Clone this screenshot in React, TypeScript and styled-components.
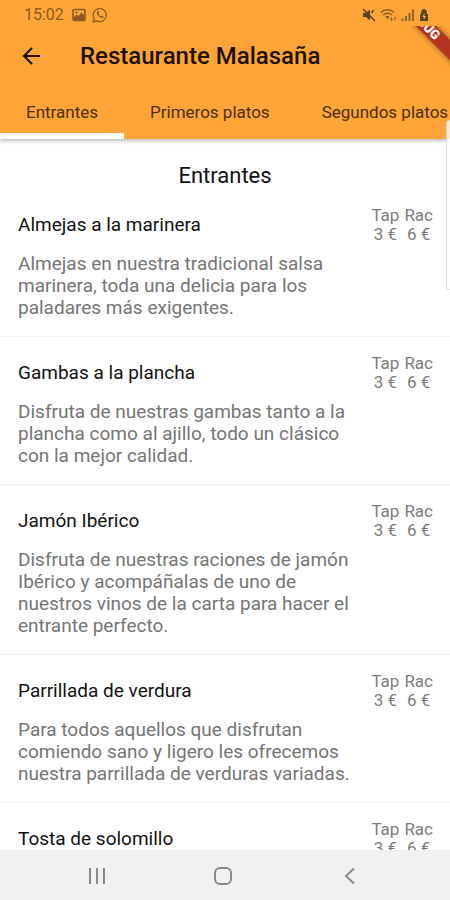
import React from 'react';
import styled, { createGlobalStyle } from 'styled-components';

const GlobalStyle = createGlobalStyle`
  * { box-sizing: border-box; }
  body {
    margin: 0;
    background: #fff;
    font-family: Roboto, sans-serif;
  }
  button { border: 0; padding: 0; background: none; font: inherit; color: inherit; cursor: pointer; }
  h1, h2, h3, p { margin: 0; }
`;

const Screen = styled.div`
  position: relative;
  display: flex;
  flex-direction: column;
  height: 100vh;
  overflow: hidden;
`;

const Header = styled.header`
  position: relative;
  z-index: 1;
  flex: none;
  background: #ffa537;
  box-shadow: 0 1px 5px rgba(0, 0, 0, 0.35);
`;

const StatusBar = styled.div`
  display: flex;
  align-items: center;
  justify-content: space-between;
  height: 28px;
  padding: 1px 21px 0 24px;
  color: #8a5a20;
`;

const StatusGroup = styled.div<{ $gap: number }>`
  display: flex;
  align-items: center;
  gap: ${({ $gap }) => $gap}px;
`;

const Clock = styled.span`
  margin-right: 2px;
  font-size: 16px;
  line-height: 20px;
`;

const AppBar = styled.div`
  display: flex;
  align-items: center;
  gap: 36px;
  height: 56px;
  padding: 0 20px;
`;

const BackButton = styled.button`
  display: flex;
  color: #1c1104;
`;

const Title = styled.h1`
  color: #1c1104;
  font-size: 24px;
  font-weight: 500;
  line-height: 32px;
  white-space: nowrap;
`;

const Tabs = styled.div`
  display: flex;
  height: 55px;
  overflow: hidden;
`;

const Tab = styled.button<{ $active: boolean }>`
  flex: none;
  padding: 6px 26px 0;
  border-bottom: 6px solid ${({ $active }) => ($active ? '#fff' : 'transparent')};
  color: #4a2f0c;
  font-size: 17px;
  line-height: 20px;
  white-space: nowrap;
`;

const RibbonCorner = styled.div`
  position: absolute;
  top: 26px;
  right: 0;
  width: 60px;
  height: 50px;
  overflow: hidden;
`;

const Ribbon = styled.div`
  position: absolute;
  top: -10px;
  left: -27px;
  width: 120px;
  height: 14px;
  background: #b5341f;
  box-shadow: 0 0 6px rgba(0, 0, 0, 0.5);
  color: #fff;
  font-size: 13px;
  font-weight: 900;
  line-height: 14px;
  text-align: center;
  transform: rotate(45deg);
`;

const Content = styled.main`
  flex: 1;
  min-height: 0;
  overflow: hidden;
`;

const SectionTitle = styled.h2`
  padding-top: 24px;
  color: #111;
  font-size: 22px;
  font-weight: 400;
  line-height: 26px;
  text-align: center;
`;

const DishList = styled.ul`
  margin: 0;
  padding: 0;
  list-style: none;
`;

const DishRow = styled.li`
  display: flex;
  justify-content: space-between;
  padding: 17px 17px 17px 18px;
  border-bottom: 1px solid #f0f0f0;
`;

const DishText = styled.div`
  flex: 1;
  max-width: 340px;
  padding-top: 8px;
`;

const DishName = styled.h3`
  margin-bottom: 17px;
  color: #111;
  font-size: 19px;
  font-weight: 400;
  line-height: 22px;
`;

const Description = styled.p`
  color: #757575;
  font-size: 19px;
  line-height: 22px;
`;

const Prices = styled.table`
  align-self: flex-start;
  border-collapse: collapse;
  color: #7c7c7c;
  font-size: 17px;
  line-height: 19px;
  text-align: center;
  white-space: nowrap;

  th, td { padding: 0; font-weight: 400; }
  th + th, td + td { padding-left: 5px; }
`;

const EdgeHandle = styled.div`
  position: absolute;
  z-index: 2;
  top: 120px;
  right: 0;
  width: 4px;
  height: 170px;
  border: 1px solid #dcdcdc;
  border-right: 0;
  border-radius: 4px 0 0 4px;
  background: rgba(255, 255, 255, 0.75);
`;

const NavBar = styled.nav`
  display: flex;
  flex: none;
  align-items: center;
  justify-content: space-around;
  height: 50px;
  padding: 2px 37px 0 34px;
  background: #f1f1f1;
  color: #8a8a8a;
`;

const NavButton = styled.button`
  display: flex;
`;

const tabs = ['Entrantes', 'Primeros platos', 'Segundos platos'];

const dishes = [
  {
    name: 'Almejas a la marinera',
    text: 'Almejas en nuestra tradicional salsa marinera, toda una delicia para los paladares más exigentes.',
  },
  {
    name: 'Gambas a la plancha',
    text: 'Disfruta de nuestras gambas tanto a la plancha como al ajillo, todo un clásico con la mejor calidad.',
  },
  {
    name: 'Jamón Ibérico',
    text: 'Disfruta de nuestras raciones de jamón Ibérico y acompáñalas de uno de nuestros vinos de la carta para hacer el entrante perfecto.',
  },
  {
    name: 'Parrillada de verdura',
    text: 'Para todos aquellos que disfrutan comiendo sano y ligero les ofrecemos nuestra parrillada de verduras variadas.',
  },
  { name: 'Tosta de solomillo', text: '' },
];

const PictureIcon = () => (
  <svg width="14" height="14" viewBox="0 0 14 14" fill="none" stroke="currentColor" strokeWidth="1.6">
    <rect x="1" y="1.5" width="12" height="11" rx="1" />
    <path d="M1.500 12V9.500L4.500 6.500l2 1.500L9.500 4.500 12.500 7.500V12z" fill="currentColor" stroke="none" />
    <circle cx="4.500" cy="4.500" r="1" fill="currentColor" stroke="none" />
  </svg>
);

const WhatsAppIcon = () => (
  <svg width="16" height="16" viewBox="0 0 16 16" fill="none" stroke="currentColor" strokeWidth="1.300">
    <path d="M1.200 14.800l1-3.500A6.500 6.500 0 1 1 4.800 13.800z" />
    <path d="M5.500 4.200c-1.500 1.300-.3 3.700 1.200 5.100 1.400 1.400 3.700 2.400 4.800.9.300-.5.100-.8-.3-1l-1.200-.6-.9.900C7.800 9 6.900 8 6.500 7l.7-.9-.6-1.600c-.2-.5-.7-.6-1.100-.3z" fill="currentColor" stroke="none" />
  </svg>
);

const MutedIcon = () => (
  <svg width="14" height="14" viewBox="0 0 14 14">
    <path d="M1 5h3l4-3.500v11L4 9H1z" fill="#59451d" />
    <path d="M1 1l12 12M9.500 5l2-3" stroke="#59451d" strokeWidth="1.600" />
  </svg>
);

const WifiIcon = () => (
  <svg width="17" height="14" viewBox="0 0 17 14" fill="none" stroke="#80602a" strokeWidth="1.500">
    <path d="M1 4.500c3.500-3.600 9.500-3.600 13 0M3.300 7c2.300-2.200 6.100-2.200 8.400 0" />
    <path d="M5.300 8.500c1.400-1 3-1 4.400 0L7.500 11z" fill="#80602a" stroke="none" />
    <path d="M11.500 9v3.500M10 11l1.500 1.500L13 11M15 12.500V9M13.800 10.200L15 9l1.200 1.200" strokeWidth="0.900" />
  </svg>
);

const SignalIcon = () => (
  <svg width="14" height="14" viewBox="0 0 14 14" stroke="#80602a" strokeWidth="1.800">
    <path d="M1.500 10.500V13M5 8v5M8.500 5v8M12 1.500V13" />
  </svg>
);

const BatteryIcon = () => (
  <svg width="10" height="14" viewBox="0 0 10 14">
    <path d="M3.500 1h3v1.500h1.300V6H9v7H1V6h1.200V2.500h1.300z" fill="#59451d" />
    <path d="M5.500 5L3.500 9H5l-.5 3L7 8H5.300z" fill="#ffb65a" />
  </svg>
);

const BackIcon = () => (
  <svg width="24" height="24" viewBox="0 0 24 24" fill="none" stroke="currentColor" strokeWidth="2.200">
    <path d="M20 12H4.500M12 4l-8 8 8 8" />
  </svg>
);

export default function App() {
  return (
    <>
      <GlobalStyle />
      <Screen>
        <Header>
          <StatusBar>
            <StatusGroup $gap={6}>
              <Clock>15:02</Clock>
              <PictureIcon />
              <WhatsAppIcon />
            </StatusGroup>
            <StatusGroup $gap={4}>
              <MutedIcon />
              <WifiIcon />
              <SignalIcon />
              <BatteryIcon />
            </StatusGroup>
          </StatusBar>
          <AppBar>
            <BackButton aria-label="Volver">
              <BackIcon />
            </BackButton>
            <Title>Restaurante Malasaña</Title>
          </AppBar>
          <Tabs role="tablist">
            {tabs.map((tab, i) => (
              <Tab key={tab} role="tab" aria-selected={i === 0} $active={i === 0}>
                {tab}
              </Tab>
            ))}
          </Tabs>
          <RibbonCorner>
            <Ribbon>DEBUG</Ribbon>
          </RibbonCorner>
        </Header>

        <Content>
          <SectionTitle>Entrantes</SectionTitle>
          <DishList>
            {dishes.map((dish) => (
              <DishRow key={dish.name}>
                <DishText>
                  <DishName>{dish.name}</DishName>
                  {dish.text && <Description>{dish.text}</Description>}
                </DishText>
                <Prices>
                  <thead>
                    <tr>
                      <th scope="col">Tap</th>
                      <th scope="col">Rac</th>
                    </tr>
                  </thead>
                  <tbody>
                    <tr>
                      <td>3 €</td>
                      <td>6 €</td>
                    </tr>
                  </tbody>
                </Prices>
              </DishRow>
            ))}
          </DishList>
        </Content>

        <EdgeHandle />

        <NavBar>
          <NavButton aria-label="Recientes">
            <svg width="18" height="18" viewBox="0 0 18 18" stroke="currentColor" strokeWidth="2">
              <path d="M2 1v16M9 1v16M16 1v16" />
            </svg>
          </NavButton>
          <NavButton aria-label="Inicio">
            <svg width="20" height="20" viewBox="0 0 20 20" fill="none" stroke="currentColor" strokeWidth="2">
              <rect x="2" y="2" width="16" height="16" rx="5" />
            </svg>
          </NavButton>
          <NavButton aria-label="Atrás">
            <svg width="18" height="18" viewBox="0 0 18 18" fill="none" stroke="currentColor" strokeWidth="2">
              <path d="M13 1.500L5 9l8 7.500" />
            </svg>
          </NavButton>
        </NavBar>
      </Screen>
    </>
  );
}
